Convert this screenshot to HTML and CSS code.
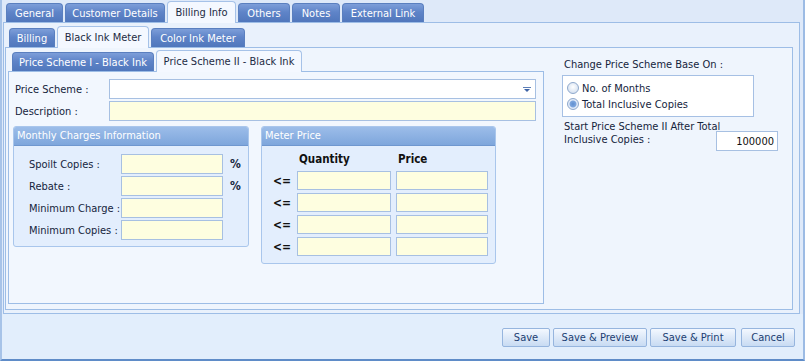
FILE: index.html
```html
<!DOCTYPE html>
<html lang="en">
<head>
  <meta charset="UTF-8" />
  <title>Billing Info - Black Ink Meter</title>
  <link rel="stylesheet" href="styles.css">
</head>
<body>
  <div class="window">
    <div class="tabs tabs-main">
      <div class="tab" style="width:57px">General</div>
      <div class="tab" style="width:100px">Customer Details</div>
      <div class="tab active" style="width:69px">Billing Info</div>
      <div class="tab" style="width:52px">Others</div>
      <div class="tab" style="width:48px">Notes</div>
      <div class="tab" style="width:82px">External Link</div>
    </div>

    <div class="page page-main">
      <div class="tabs tabs-sub">
        <div class="tab" style="width:46px">Billing</div>
        <div class="tab active" style="width:92px">Black Ink Meter</div>
        <div class="tab" style="width:94px">Color Ink Meter</div>
      </div>

      <div class="page page-sub">
        <div class="scheme-col">
          <div class="tabs tabs-scheme">
            <div class="tab" style="width:142px">Price Scheme I - Black Ink</div>
            <div class="tab active" style="width:146px">Price Scheme II - Black Ink</div>
          </div>

          <div class="page page-scheme">
            <div class="field-row">
              <label>Price Scheme :</label>
              <div class="combo">
                <svg width="8" height="5" viewBox="0 0 8 5"><rect x="0" y="0" width="8" height="1" fill="#5d7fb8"/><path d="M1 2 H7 L4 5 Z" fill="#3d63a6"/></svg>
              </div>
            </div>
            <div class="field-row">
              <label>Description :</label>
              <input class="box wide" type="text">
            </div>

            <div class="groups">
              <div class="group monthly">
                <div class="group-head">Monthly Charges Information</div>
                <div class="group-body">
                  <div class="m-row"><label>Spoilt Copies :</label><input class="box" type="text"><span class="unit">%</span></div>
                  <div class="m-row"><label>Rebate :</label><input class="box" type="text"><span class="unit">%</span></div>
                  <div class="m-row"><label>Minimum Charge :</label><input class="box" type="text"></div>
                  <div class="m-row"><label>Minimum Copies :</label><input class="box" type="text"></div>
                </div>
              </div>

              <div class="group meter">
                <div class="group-head">Meter Price</div>
                <div class="group-body meter-grid">
                  <span></span><span class="col-head">Quantity</span><span class="col-head">Price</span>
                  <span class="le">&lt;=</span><input class="box" type="text"><input class="box" type="text">
                  <span class="le">&lt;=</span><input class="box" type="text"><input class="box" type="text">
                  <span class="le">&lt;=</span><input class="box" type="text"><input class="box" type="text">
                  <span class="le">&lt;=</span><input class="box" type="text"><input class="box" type="text">
                </div>
              </div>
            </div>
          </div>
        </div>

        <div class="side">
          <div class="side-title">Change Price Scheme Base On :</div>
          <div class="radio-box">
            <div class="radio"><span class="dot"></span>No. of Months</div>
            <div class="radio"><span class="dot checked"></span>Total Inclusive Copies</div>
          </div>
          <div class="start-row">
            <div class="start-label">Start Price Scheme II After Total<br>Inclusive Copies :</div>
            <input class="box white num" type="text" value="100000">
          </div>
        </div>
      </div>
    </div>

    <div class="footer">
      <button style="width:48px">Save</button>
      <button style="width:94px">Save &amp; Preview</button>
      <button style="width:86px">Save &amp; Print</button>
      <button class="cancel" style="width:54px">Cancel</button>
    </div>
  </div>
</body>
</html>
```

FILE: styles.css
```css
* {
  box-sizing: border-box;
}
body {
  margin: 0;
  background: #dbe8f8;
  font-family: "DejaVu Sans Condensed", "DejaVu Sans", sans-serif;
  font-stretch: condensed;
  font-size: 11px;
  color: #15243c;
}
.window {
  width: 805px;
  height: 361px;
  display: flex;
  flex-direction: column;
  background: #dee9f9;
  border-left: 2px solid #a7c3e8;
  border-right: 2px solid #9cbbe4;
  border-bottom: 2px solid #5f8cc8;
}

/* tab strips */
.tabs {
  display: flex;
  align-items: flex-end;
  gap: 2px;
}
.tab {
  height: 19px;
  display: flex;
  align-items: center;
  justify-content: center;
  color: #fff;
  font-size: 11px;
  white-space: nowrap;
  border: 1px solid #5a7fbf;
  border-bottom: none;
  border-radius: 4px 4px 0 0;
  background: linear-gradient(#7d9ed9, #5f84c8 45%, #5077bc);
}
.tab.active {
  height: 22px;
  color: #1d2b44;
  background: #f4f8ff;
  border-color: #a6c2e8;
  margin-bottom: -1px;
  position: relative;
  z-index: 1;
}
.tabs-main {
  height: 22px;
  padding-left: 4px;
}
.tabs-sub {
  height: 24px;
  padding-left: 4px;
}
.tabs-scheme {
  height: 23px;
  padding-left: 4px;
}

/* pages */
.page {
  border: 1px solid #9dbde6;
}
.page-main {
  height: 292px;
  margin-left: 1px;
  width: 797px;
  background: #e9f1fc;
  padding: 0 0 0 1px;
}
.page-sub {
  width: 788px;
  height: 263px;
  background: #eff5fd;
  display: flex;
  padding-left: 2px;
}
.scheme-col {
  width: 536px;
}
.page-scheme {
  height: 233px;
  background: #f2f7fe;
  padding: 7px 7px 0 6px;
}

/* form rows */
label {
  white-space: nowrap;
}
.field-row {
  display: flex;
  align-items: center;
  height: 20px;
  margin-bottom: 2px;
}
.field-row label {
  width: 94px;
}
.box {
  height: 20px;
  border: 1px solid #a7c0e2;
  background: #fefee0;
  font: inherit;
  padding: 0 3px;
  outline: none;
}
.box.white {
  background: #fff;
}
.wide, .combo {
  width: 427px;
}
.combo {
  height: 20px;
  border: 1px solid #a7c0e2;
  background: #fff;
  display: flex;
  align-items: center;
  justify-content: flex-end;
  padding-right: 4px;
}

/* group boxes */
.groups {
  display: flex;
  align-items: flex-start;
  gap: 12px;
  margin: 5px 0 0 -2px;
}
.group {
  border: 1px solid #a9c6ec;
  border-radius: 3px;
  background: #e3eefd;
}
.group-head {
  height: 19px;
  line-height: 18px;
  padding-left: 3px;
  color: #fff;
  white-space: nowrap;
  background: linear-gradient(#9cbde9, #7ea6dc);
  border-bottom: 1px solid #6f97cf;
  border-radius: 2px 2px 0 0;
}
.monthly {
  width: 236px;
  height: 121px;
}
.monthly .group-body {
  padding: 8px 0 0 15px;
}
.m-row {
  display: flex;
  align-items: center;
  margin-bottom: 2px;
}
.m-row label {
  width: 92px;
}
.m-row .box {
  width: 102px;
}
.unit {
  margin-left: 7px;
  font-weight: bold;
  font-size: 12px;
}
.meter {
  width: 235px;
  height: 138px;
}
.meter-grid {
  display: grid;
  grid-template-columns: 19px 94px 92px;
  grid-template-rows: 22px repeat(4, 19px);
  row-gap: 3px;
  column-gap: 5px;
  padding: 0 0 0 11px;
}
.meter-grid .box {
  height: 19px;
}
.col-head {
  font-weight: bold;
  font-size: 11.5px;
  color: #111;
  align-self: center;
  padding: 3px 0 0 2px;
}
.le {
  font-weight: bold;
  font-size: 12px;
  color: #111;
  align-self: center;
}

/* right side */
.side {
  padding: 10px 0 0 18px;
}
.side-title {
  height: 16px;
  margin-left: 2px;
  white-space: nowrap;
}
.radio-box {
  width: 192px;
  height: 42px;
  margin-top: 1px;
  background: #fff;
  border: 1px solid #a6c0e4;
  padding: 4px 0 0 4px;
}
.radio {
  display: flex;
  align-items: center;
  height: 16px;
  white-space: nowrap;
}
.dot {
  width: 12px;
  height: 12px;
  border-radius: 50%;
  border: 1px solid #8ea8cc;
  background: radial-gradient(circle at 50% 40%, #fff, #c9d8ec);
  margin-right: 3px;
}
.dot.checked {
  background: radial-gradient(circle, #5f8fd0 0, #7ea6de 3px, #e6eefa 4px, #c9d8ec);
}
.start-row {
  display: flex;
  margin-top: 3px;
}
.start-label {
  width: 152px;
  line-height: 13px;
  margin-left: 2px;
  white-space: nowrap;
}
.num {
  width: 62px;
  margin-top: 11px;
  text-align: right;
  color: #111;
}

/* footer buttons */
.footer {
  flex: 1;
  display: flex;
  justify-content: flex-end;
  align-items: flex-start;
  gap: 3px;
  padding: 14px 8px 0 0;
  background: #e2eefc;
}
button {
  height: 19px;
  font-family: inherit;
  font-stretch: condensed;
  font-size: 11px;
  color: #1c3e72;
  border: 1px solid #96b5de;
  border-radius: 2px;
  background: linear-gradient(#f3f8ff, #dde9f8 50%, #c8dbf3);
  padding: 0;
}
button.cancel {
  margin-left: 2px;
}
```
